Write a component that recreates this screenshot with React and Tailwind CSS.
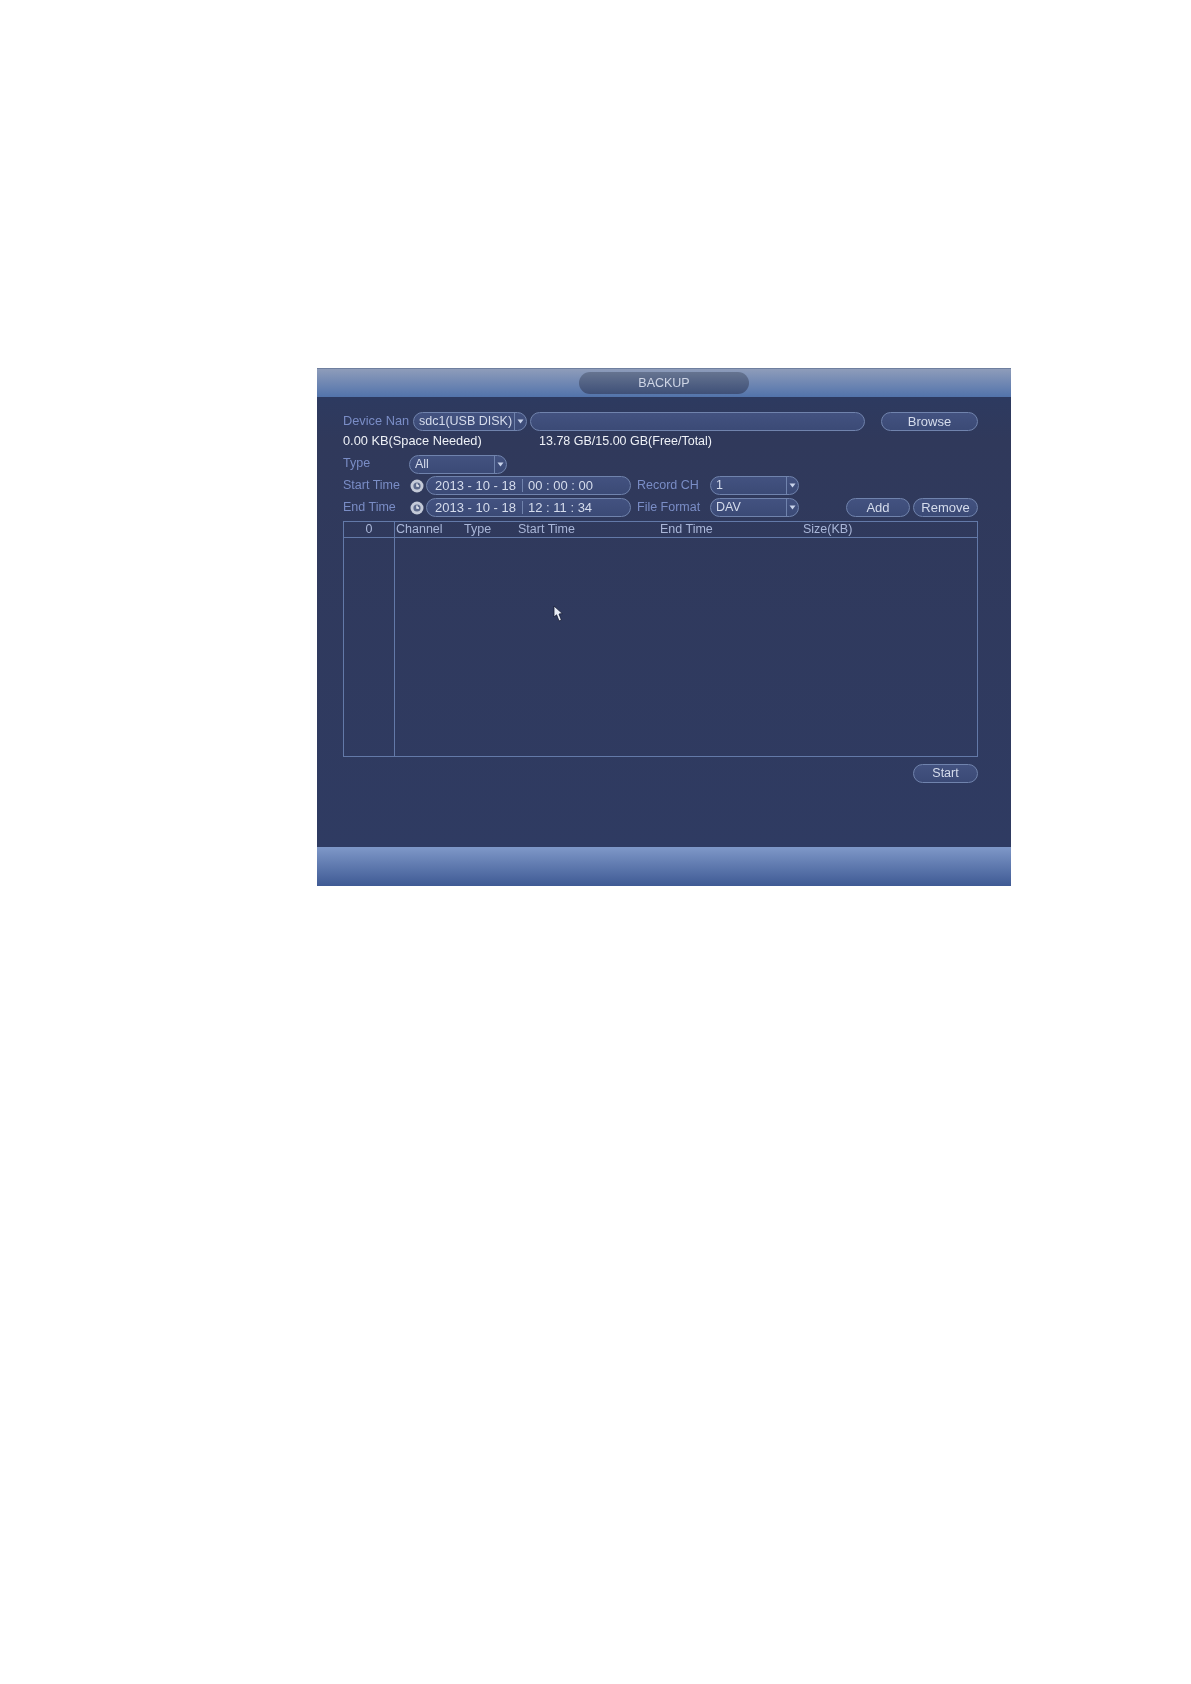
import React from "react";

const Caret = () => (
  <svg width="7" height="5" viewBox="0 0 7 5" className="block">
    <path d="M0.5 0.5 L6.5 0.5 L3.5 4.5 Z" fill="#c9d3ea" />
  </svg>
);

const Pill = ({ className = "", children }) => (
  <div
    className={`h-[19px] shrink-0 flex items-center rounded-full border-[1.5px] border-[#7083ad] bg-gradient-to-b from-[#435280] to-[#3b4a76] text-[#d5dcec] ${className}`}
  >
    {children}
  </div>
);

const Combo = ({ className, text }) => (
  <Pill className={className}>
    <span className="flex-1 min-w-0 pl-[5px] whitespace-nowrap text-[12.5px]">{text}</span>
    <span className="flex items-center justify-center w-[12px] shrink-0 h-full border-l border-[#7083ad]">
      <Caret />
    </span>
  </Pill>
);

const Button = ({ className, text }) => (
  <Pill className={`justify-center ${className}`}>{text}</Pill>
);

const Clock = () => (
  <svg width="14" height="14" viewBox="0 0 14 14" className="shrink-0">
    <circle cx="7" cy="7" r="6.5" fill="#c4cad8" />
    <circle cx="7" cy="7" r="3.6" fill="#5d6a8c" />
    <path d="M7 4.5 V7 H9" stroke="#eef1f7" strokeWidth="1.4" fill="none" />
  </svg>
);

const DateField = ({ date, time }) => (
  <Pill className="w-[205px] ml-[2px]">
    <span className="w-[96px] pl-[8px] whitespace-pre border-r border-[#7083ad]">{date}</span>
    <span className="pl-[5px] whitespace-pre">{time}</span>
  </Pill>
);

const Cursor = () => (
  <svg width="12" height="18" viewBox="0 0 12 18" className="absolute left-[208px] top-[83px]">
    <path d="M2 1 L2 12 L4.6 9.8 L7 16 L9.4 15 L7 9 L10.4 8.6 Z" fill="#e8edf6" stroke="#141b33" strokeWidth="0.8" />
  </svg>
);

const App = () => {
  return (
    <div className="min-h-[1684px] bg-white pt-[368px] pl-[317px] font-['Liberation_Sans',Arial,sans-serif] text-[13px] leading-none">
      <div className="w-[694px] h-[518px] flex flex-col bg-[#30395b] blur-[0.7px]">
        {/* title bar */}
        <div className="h-[29px] shrink-0 flex justify-center pt-[3px] border-t border-[#6f7f9f] bg-gradient-to-b from-[#8e9cba] to-[#5273ab]">
          <div className="w-[170px] h-[22px] flex items-center justify-center rounded-full bg-gradient-to-b from-[#667490] to-[#3f5078] text-[#cfd6e6] text-[12.5px]">
            BACKUP
          </div>
        </div>

        {/* form */}
        <div className="flex-1 pl-[26px] pr-[33px] pt-[15px] bg-gradient-to-b from-[#2d3a60] via-[#30395b] via-10% to-[#2f3b62]">
          <div className="flex items-center text-[#7a8dc6]">
            <span className="w-[70px] shrink-0 whitespace-nowrap text-[12.8px]">Device Nan</span>
            <Combo className="w-[114px]" text="sdc1(USB DISK)" />
            <Pill className="w-[335px] ml-[3px]" />
            <Button className="w-[97px] ml-[16px]" text="Browse" />
          </div>

          <div className="h-[21px] flex items-center text-[#eef1f7]">
            <span className="w-[196px] shrink-0 text-[12.8px]">0.00 KB(Space Needed)</span>
            <span className="text-[12.5px]">13.78 GB/15.00 GB(Free/Total)</span>
          </div>

          <div className="mt-[3px] flex items-center text-[#7a8dc6]">
            <span className="w-[66px] shrink-0 text-[12.5px] -mt-[2px]">Type</span>
            <Combo className="w-[98px]" text="All" />
          </div>

          <div className="mt-[2px] flex items-center text-[#7a8dc6]">
            <span className="w-[67px] shrink-0 text-[12.5px]">Start Time</span>
            <Clock />
            <DateField date="2013 - 10 - 18" time="00 : 00 : 00" />
            <span className="w-[73px] ml-[6px] shrink-0 text-[12.5px]">Record CH</span>
            <Combo className="w-[89px]" text="1" />
          </div>

          <div className="mt-[3px] flex items-center text-[#7a8dc6]">
            <span className="w-[67px] shrink-0 text-[12.5px]">End Time</span>
            <Clock />
            <DateField date="2013 - 10 - 18" time="12 : 11 : 34" />
            <span className="w-[73px] ml-[6px] shrink-0 text-[12.5px]">File Format</span>
            <Combo className="w-[89px]" text="DAV" />
            <Button className="w-[64px] ml-[47px]" text="Add" />
            <Button className="w-[65px] ml-[3px]" text="Remove" />
          </div>

          {/* file list */}
          <div className="relative mt-[4px] w-[635px] h-[236px] flex flex-col border border-[#6379a8] text-[12.5px]">
            <div className="h-[16px] shrink-0 grid grid-cols-[50px_68px_54px_142px_143px_1fr] items-center border-b border-[#6379a8] text-[#a9b6d8]">
              <span className="text-center">0</span>
              <span className="pl-[2px]">Channel</span>
              <span className="pl-[2px]">Type</span>
              <span className="pl-[2px]">Start Time</span>
              <span className="pl-[2px]">End Time</span>
              <span className="pl-[2px]">Size(KB)</span>
            </div>
            <div className="flex-1 w-[51px] border-r border-[#6379a8]" />
            <Cursor />
            <div className="absolute left-[50px] top-0 h-[16px] border-l border-[#6379a8]" />
          </div>

          <div className="mt-[7px] flex justify-end">
            <Button className="w-[65px] text-[12.5px]" text="Start" />
          </div>
        </div>

        {/* footer bar */}
        <div className="h-[39px] shrink-0 bg-gradient-to-b from-[#7f98c8] to-[#3f5a94]" />
      </div>
    </div>
  );
};

export default App;
